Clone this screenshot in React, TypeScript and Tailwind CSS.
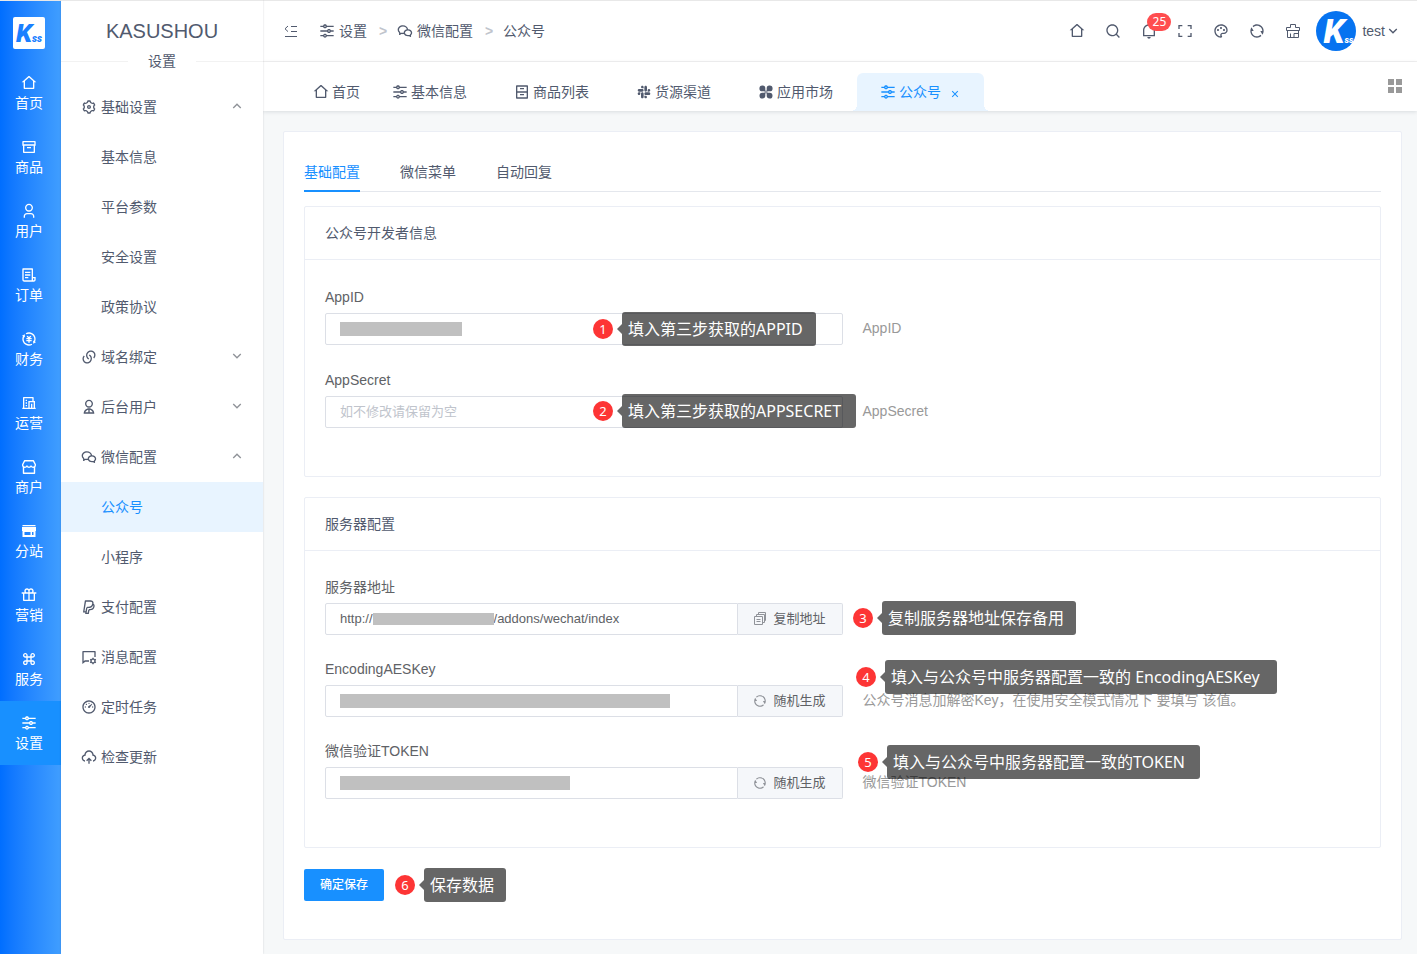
import type { ReactNode } from 'react';
import type { IconType } from 'react-icons';
import {
  RiHome2Line, RiArchiveLine, RiUser3Line, RiFileList3Line, RiExchangeCnyLine, RiHotelLine,
  RiGiftLine, RiCommandLine, RiEqualizerLine, RiSettings3Line, RiLinksLine,
  RiUser2Line, RiWechatLine, RiPaypalLine, RiChatSettingsLine, RiDashboard3Line,
  RiUploadCloud2Line, RiArchiveDrawerLine, RiSlackFill, RiSearchLine,
  RiNotificationLine, RiFullscreenLine, RiPaletteLine, RiRefreshLine,
  RiArrowDownSLine, RiArrowUpSLine, RiCloseLine,
} from 'react-icons/ri';

type IconProps = { className?: string };

const StoreIcon = ({ className }: IconProps) => (
  <svg viewBox="0 0 16 16" fill="none" stroke="currentColor" strokeWidth="1.4" strokeLinejoin="round" className={className} aria-hidden="true">
    <path d="M3.700 1.700h8.600L14.300 5.500C14.600 7 13.600 8.300 12.200 8.300C11.200 8.300 10.400 7.700 10 7C9.600 7.900 8.900 8.300 8 8.300C7.100 8.300 6.400 7.900 6 7C5.600 7.700 4.800 8.300 3.800 8.300C2.400 8.300 1.400 7 1.700 5.500z" />
    <path d="M2.500 8v6.300h11V8" />
  </svg>
);

const SiteIcon = ({ className }: IconProps) => (
  <svg viewBox="0 0 16 16" fill="currentColor" className={className} aria-hidden="true">
    <path d="M1.500 2h13v1.200h-13zM1 4h14v4H1z" />
    <path fillRule="evenodd" d="M1.500 7.500h13V14h-13zM3.500 9v3h6V9zM11 9v3h1.500V9z" />
  </svg>
);

const PetalsIcon = ({ className }: IconProps) => (
  <svg viewBox="0 0 16 16" fill="currentColor" className={className} aria-hidden="true">
    <path d="M4.300 1.500A2.800 2.800 0 0 1 7.300 4.300V7.300H4.300A2.900 2.900 0 0 1 4.300 1.500zM11.700 1.500A2.900 2.900 0 0 1 11.700 7.300H8.700V4.300A2.800 2.800 0 0 1 11.700 1.500zM4.300 8.700H7.300V11.700A2.900 2.900 0 1 1 4.300 8.700zM8.700 8.700H11.700A2.900 2.900 0 1 1 8.700 11.700z" />
    <path d="M6.500 6.500h3v3h-3z" opacity="0.6" />
  </svg>
);

const CleanIcon = ({ className }: IconProps) => (
  <svg viewBox="0 0 16 16" fill="none" stroke="currentColor" className={className} aria-hidden="true">
    <path d="M1.500 7.500v-3h4v-3h5v3h4v3zM2.500 7.500v7h11v-7M5.500 14v-3.500M9 14.500v-4h4" />
  </svg>
);

const FoldIcon = ({ className }: IconProps) => (
  <svg viewBox="0 0 14 14" fill="none" stroke="currentColor" className={className} aria-hidden="true">
    <path d="M7 2.500H13M7 7.500H13M1 12.500H13M4 2L1 4.800L4 7.600" />
  </svg>
);

const CopyIcon = ({ className }: IconProps) => (
  <svg viewBox="0 0 14 14" fill="none" stroke="currentColor" className={className} aria-hidden="true">
    <path d="M1.500 4.500h8v8h-8zM3.500 4V2.500h8v8H10M5.500 2V0.500h7v8H12M3.500 7.500h4M3.500 9.500h4" />
  </svg>
);

const rail: { label: string; Icon: IconType | typeof SiteIcon }[] = [
  { label: '首页', Icon: RiHome2Line },
  { label: '商品', Icon: RiArchiveLine },
  { label: '用户', Icon: RiUser3Line },
  { label: '订单', Icon: RiFileList3Line },
  { label: '财务', Icon: RiExchangeCnyLine },
  { label: '运营', Icon: RiHotelLine },
  { label: '商户', Icon: StoreIcon },
  { label: '分站', Icon: SiteIcon },
  { label: '营销', Icon: RiGiftLine },
  { label: '服务', Icon: RiCommandLine },
  { label: '设置', Icon: RiEqualizerLine },
];

const menu: { label: string; Icon?: IconType; open?: boolean }[] = [
  { label: '基础设置', Icon: RiSettings3Line, open: true },
  { label: '基本信息' },
  { label: '平台参数' },
  { label: '安全设置' },
  { label: '政策协议' },
  { label: '域名绑定', Icon: RiLinksLine, open: false },
  { label: '后台用户', Icon: RiUser2Line, open: false },
  { label: '微信配置', Icon: RiWechatLine, open: true },
  { label: '公众号' },
  { label: '小程序' },
  { label: '支付配置', Icon: RiPaypalLine },
  { label: '消息配置', Icon: RiChatSettingsLine },
  { label: '定时任务', Icon: RiDashboard3Line },
  { label: '检查更新', Icon: RiUploadCloud2Line },
];

const pages: { label: string; Icon: IconType | typeof PetalsIcon }[] = [
  { label: '基本信息', Icon: RiEqualizerLine },
  { label: '商品列表', Icon: RiArchiveDrawerLine },
  { label: '货源渠道', Icon: RiSlackFill },
  { label: '应用市场', Icon: PetalsIcon },
];

function Rail() {
  return (
    <nav className="flex w-[61px] shrink-0 flex-col border-t border-[#e8e8e8] bg-linear-to-r from-[#006eff] to-[#409eff] text-white">
      <div className="flex h-[60px] items-center justify-center pt-[3px]">
        <a href="#home" aria-label="Kss" className="mr-[3px] flex size-8 items-baseline justify-center rounded-xs bg-white font-['Roboto',sans-serif] font-black italic text-[#1a80ff]">
          <span className="text-[26px] leading-8">K</span>
          <span className="text-[10px] leading-4">ss</span>
        </a>
      </div>
      {rail.map(({ label, Icon }) => (
        <a
          key={label}
          href="#rail"
          className={`flex h-16 flex-col items-center pt-3.5 pr-[3px] ${label === '设置' ? 'bg-[#1890ff]' : ''}`}
        >
          <Icon className="size-4" />
          <span className="mt-0.5 leading-5">{label}</span>
        </a>
      ))}
    </nav>
  );
}

function Sidebar() {
  return (
    <aside className="z-10 w-[202px] shrink-0 border-t border-[#e8e8e8] bg-white shadow-[0_0_2px_rgba(0,21,41,0.15)]">
      <h1 className="h-[50px] pt-4 text-center text-[20px] leading-7 text-[#515a6e]">KASUSHOU</h1>
      <div className="flex h-5 items-center">
        <span className="h-px flex-1 bg-[#f2f2f2]" />
        <span className="px-5 leading-5">设置</span>
        <span className="h-px flex-1 bg-[#f2f2f2]" />
      </div>
      <ul className="pt-[11px]">
        {menu.map(({ label, Icon, open }) => (
          <li key={label}>
            <a
              href="#menu"
              className={`flex h-[50px] items-center gap-1 pr-[18px] ${Icon ? 'pl-5' : 'pl-10'} ${label === '公众号' ? 'bg-[#e8f4ff] text-[#1890ff]' : ''}`}
            >
              {Icon && <Icon className="size-4" />}
              <span>{label}</span>
              {open === true && <RiArrowUpSLine className="mb-0.5 ml-auto size-4 text-[#909399]" />}
              {open === false && <RiArrowDownSLine className="mb-0.5 ml-auto size-4 text-[#909399]" />}
            </a>
          </li>
        ))}
      </ul>
    </aside>
  );
}

function IconButton({ label, children }: { label: string; children: ReactNode }) {
  return (
    <button type="button" aria-label={label} className="relative flex size-4 items-center justify-center">
      {children}
    </button>
  );
}

function Header() {
  return (
    <header className="flex h-[62px] items-center justify-between border-t border-b border-t-[#e8e8e8] border-b-[#f2f2f2] bg-white pr-4 pl-[21px]">
      <div className="flex items-center">
        <button type="button" aria-label="折叠菜单" className="mr-[21px]">
          <FoldIcon className="size-3.5" />
        </button>
        <nav className="flex items-center">
          <a href="#settings" className="flex items-center gap-1"><RiEqualizerLine className="size-4" />设置</a>
          <span className="w-[30px] pl-0.5 text-center font-bold text-[#c0c4cc]">&gt;</span>
          <a href="#wechat" className="flex items-center gap-1"><RiWechatLine className="size-4" />微信配置</a>
          <span className="w-[30px] pl-0.5 text-center font-bold text-[#c0c4cc]">&gt;</span>
          <span>公众号</span>
        </nav>
      </div>
      <div className="flex items-center">
        <div className="flex items-center gap-5">
          <IconButton label="主页"><RiHome2Line className="size-4" /></IconButton>
          <IconButton label="搜索"><RiSearchLine className="size-4" /></IconButton>
          <IconButton label="通知">
            <RiNotificationLine className="size-4" />
            <span className="absolute -top-2.5 left-1.5 h-[18px] w-6 rounded-full bg-[#ff4d4f] text-center font-['Noto_Sans',sans-serif] text-xs leading-[18px] text-white">25</span>
          </IconButton>
          <IconButton label="全屏"><RiFullscreenLine className="size-4" /></IconButton>
          <IconButton label="主题"><RiPaletteLine className="size-4" /></IconButton>
          <IconButton label="刷新"><RiRefreshLine className="size-4" /></IconButton>
          <IconButton label="清理缓存"><CleanIcon className="size-4" /></IconButton>
        </div>
        <button type="button" className="ml-[15px] flex items-center">
          <span className="flex size-10 items-baseline justify-center rounded-full bg-[#0673f0] pl-1 font-['Roboto',sans-serif] font-black italic text-white">
            <span className="text-[34px] leading-10">K</span>
            <span className="text-[9px] leading-3">ss</span>
          </span>
          <span className="ml-1.5">test</span>
          <RiArrowDownSLine className="size-4" />
        </button>
      </div>
    </header>
  );
}

function PageTabs() {
  return (
    <div className="flex h-[49px] items-end bg-white pr-[15px] pl-[27px] shadow-[0_1px_4px_rgba(0,21,41,0.12)]">
      <nav className="flex flex-1 items-end leading-[38px]">
        <a href="#tab" className="flex items-center gap-[3px] pr-[9px] pl-[23px]"><RiHome2Line className="size-4" />首页</a>
        {pages.map(({ label, Icon }) => (
          <a key={label} href="#tab" className="flex items-center gap-[3px] pr-6 pl-[23px]"><Icon className="size-4" />{label}</a>
        ))}
        <div className="relative flex items-center rounded-t-md bg-[#e8f4ff] pr-[23px] pl-[23px] text-[#1890ff] before:absolute before:bottom-0 before:-left-1.5 before:size-1.5 before:bg-[radial-gradient(circle_at_0_0,transparent_6px,#e8f4ff_6px)] after:absolute after:-right-1.5 after:bottom-0 after:size-1.5 after:bg-[radial-gradient(circle_at_100%_0,transparent_6px,#e8f4ff_6px)]">
          <a href="#tab" className="flex items-center gap-[3px]"><RiEqualizerLine className="size-4" />公众号</a>
          <button type="button" aria-label="关闭" className="mt-1 ml-2"><RiCloseLine className="size-3" /></button>
        </div>
      </nav>
      <button type="button" aria-label="更多" className="mb-[18px] grid grid-cols-2 gap-0.5">
        <span className="size-1.5 bg-[#999]" /><span className="size-1.5 bg-[#999]" />
        <span className="size-1.5 bg-[#999]" /><span className="size-1.5 bg-[#999]" />
      </button>
    </div>
  );
}

function Note({ n, text, place, width }: { n: number; text: string; place: string; width: string }) {
  return (
    <div className={`absolute z-10 flex h-[34px] items-center font-['Noto_Sans','Noto_Sans_CJK_SC',sans-serif] whitespace-nowrap text-white ${place}`}>
      <span className="size-5 rounded-full bg-[#fd3535] text-center text-[13px] leading-5">{n}</span>
      <span className="ml-1 border-y-[5px] border-r-[5px] border-y-transparent border-r-black/60" />
      <span className={`h-[34px] rounded-[3px] bg-black/60 pl-1.5 text-base leading-[34px] ${width}`}>{text}</span>
    </div>
  );
}

type FieldProps = {
  id: string;
  label: string;
  hint?: string;
  mask?: string;
  prefix?: string;
  value?: string;
  placeholder?: string;
  action?: string;
  note: ReactNode;
};

function Field({ id, label, hint, mask, prefix, value, placeholder, action, note }: FieldProps) {
  return (
    <div>
      <label htmlFor={id} className="block leading-8 text-[#606266]">{label}</label>
      <div className="relative flex h-8 items-center">
        <div className="flex h-8 w-1/2 shrink-0 text-[13px]">
          <div className={`flex min-w-0 flex-1 items-center border border-[#dcdfe6] bg-white pl-3.5 text-[#606266] ${action ? 'rounded-l-xs' : 'rounded-xs'}`}>
            {prefix && <span>{prefix}</span>}
            {mask && <span className={`shrink-0 bg-[#c0c0c0] ${mask}`} />}
            <input
              id={id}
              defaultValue={value}
              placeholder={placeholder}
              className="h-full min-w-0 flex-1 bg-transparent pb-0.5 outline-none placeholder:text-[#c0c4cc]"
            />
          </div>
          {action && (
            <button type="button" className="flex w-[105px] items-center justify-center gap-1.5 rounded-r-xs border border-l-0 border-[#dcdfe6] bg-[#f5f7fa] text-[#606266]">
              {action === '复制地址' ? <CopyIcon className="size-3.5 text-[#909399]" /> : <RiRefreshLine className="size-3.5 text-[#909399]" />}
              {action}
            </button>
          )}
        </div>
        <span className="ml-5 pb-0.5 text-[#999]">{hint}</span>
        {note}
      </div>
    </div>
  );
}

function Card({ title, children }: { title: string; children: ReactNode }) {
  return (
    <section className="rounded-xs border border-[#ebeef5] bg-white">
      <h2 className="border-b border-[#ebeef5] px-5 py-4 leading-5">{title}</h2>
      {children}
    </section>
  );
}

export default function App() {
  return (
    <div className="flex min-h-screen bg-[#f6f8f9] font-['Liberation_Sans','Noto_Sans_CJK_SC',sans-serif] text-sm text-[#515a6e]">
      <Rail />
      <Sidebar />
      <div className="min-w-0 flex-1">
        <Header />
        <PageTabs />
        <main className="pt-5 pr-[15px] pb-3.5 pl-5">
          <form className="rounded-xs border border-[#ebeef5] bg-white px-5 pt-5 pb-[38px]">
            <div role="tablist" className="mb-3.5 flex h-10 gap-10 border-b border-[#e4e7ed]">
              <button type="button" role="tab" aria-selected="true" className="-mb-px border-b-2 border-[#1890ff] pt-0.5 text-[#1890ff]">基础配置</button>
              <button type="button" role="tab" aria-selected="false">微信菜单</button>
              <button type="button" role="tab" aria-selected="false">自动回复</button>
            </div>
            <div className="flex flex-col gap-5">
              <Card title="公众号开发者信息">
                <div className="flex flex-col gap-[19px] px-5 pt-[21px] pb-12">
                  <Field id="appid" label="AppID" hint="AppID" mask="h-3.5 w-[122px]"
                    note={<Note n={1} text="填入第三步获取的APPID" place="left-[268px] -top-px" width="w-[194px]" />} />
                  <Field id="secret" label="AppSecret" hint="AppSecret" placeholder="如不修改请保留为空"
                    note={<Note n={2} text="填入第三步获取的APPSECRET" place="left-[268px] -top-0.5" width="w-[234px]" />} />
                </div>
              </Card>
              <Card title="服务器配置">
                <div className="flex flex-col gap-[18px] px-5 pt-5 pb-12">
                  <Field id="url" label="服务器地址" prefix="http://" mask="h-3 w-[121px]" value="/addons/wechat/index" action="复制地址"
                    note={<Note n={3} text="复制服务器地址保存备用" place="left-[528px] -top-0.5" width="w-[194px]" />} />
                  <Field id="aeskey" label="EncodingAESKey" mask="h-3.5 w-[330px]" action="随机生成"
                    hint="公众号消息加解密Key，在使用安全模式情况下 要填写 该值。"
                    note={<Note n={4} text="填入与公众号中服务器配置一致的 EncodingAESKey" place="left-[531px] -top-[25px]" width="w-[392px]" />} />
                  <Field id="token" label="微信验证TOKEN" hint="微信验证TOKEN" mask="h-3.5 w-[230px]" action="随机生成"
                    note={<Note n={5} text="填入与公众号中服务器配置一致的TOKEN" place="left-[533px] -top-[22px]" width="w-[313px]" />} />
                </div>
              </Card>
            </div>
            <div className="relative mt-[21px] flex">
              <button type="button" className="h-8 w-20 rounded-xs bg-[#1890ff] text-xs font-medium text-white">确定保存</button>
              <Note n={6} text="保存数据" place="left-[91px] -top-px" width="w-[82px]" />
            </div>
          </form>
        </main>
      </div>
    </div>
  );
}
